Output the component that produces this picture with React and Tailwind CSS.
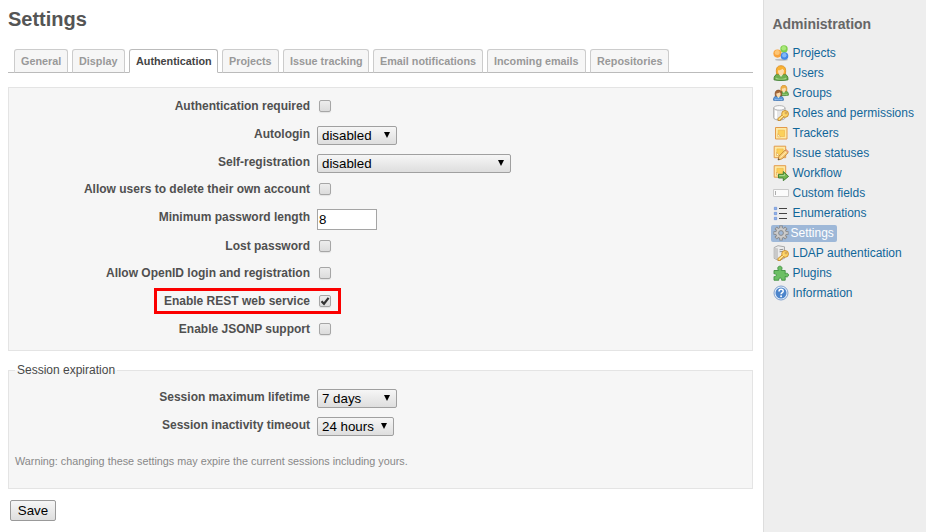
import React from "react";

const tabs = [
  ["General", "w-[54px]"],
  ["Display", "w-[53px]"],
  ["Authentication", "w-[89px]"],
  ["Projects", "w-[57px]"],
  ["Issue tracking", "w-[86px]"],
  ["Email notifications", "w-[110px]"],
  ["Incoming emails", "w-[99px]"],
  ["Repositories", "w-[79px]"],
];

function Check({ checked }) {
  return (
    <span className="ml-[2px] mt-[2px] flex h-3 w-3 items-center justify-center rounded-[2px] border border-[#a6a6a6] bg-linear-to-b from-[#ededed] to-[#dcdcdc] shadow-[0_1px_1px_rgba(0,0,0,0.08)]">
      {checked && (
        <svg viewBox="0 0 10 10" className="h-[10px] w-[10px] shrink-0">
          <path d="M1.5 5.2 4 7.8 8.6 1.9" fill="none" stroke="#333" strokeWidth="2.2" />
        </svg>
      )}
    </span>
  );
}

function Select({ value, width }) {
  return (
    <span className={`flex h-[19px] items-center justify-between rounded-[2px] border border-[#a0a0a0] bg-linear-to-b from-[#f6f6f6] to-[#dedede] pl-1 pr-[6px] text-[13.333px] leading-[17px] text-black ${width}`}>
      <span className="whitespace-nowrap">{value}</span>
      <svg viewBox="0 0 6 6" className="-mt-[2px] h-[6px] w-[6px] shrink-0">
        <path d="M0 0h6L3 6z" fill="#000" />
      </svg>
    </span>
  );
}

function Row({ label, height, marked, children }) {
  return (
    <div className={`relative flex items-start ${height}`}>
      <label className="w-[301px] shrink-0 text-right text-[12px] font-bold leading-4 text-[#505050]">{label}</label>
      <div className="ml-[7px]">{children}</div>
      {marked && <span className="absolute -top-[5px] left-[145px] h-[26px] w-[187px] border-[3px] border-[#fb0000]" />}
    </div>
  );
}

function Key() {
  return (
    <g stroke="#c08324" strokeWidth=".8" strokeLinejoin="round">
      <path d="m10 9.300-5.200 4.300.2 1.900h2.500l.3-1.400h1.300l.2-1.300 2.700-1.300z" fill="#fbd262" />
      <circle cx="12.100" cy="8.900" r="3.400" fill="#fcd468" />
      <path d="m10.500 10.500-4.300 3.800" stroke="#fff0b0" strokeWidth="1" />
      <circle cx="13" cy="8" r=".9" fill="#fff" />
    </g>
  );
}

function Person({ hair, hairEdge, body, shine, edge }) {
  return (
    <g>
      <path d="M1 14.800C.8 11 2.500 9.500 5 9h6c2.500.5 4.200 2 4 5.800-3 .9-11 .9-14 0z" fill={body} stroke={edge} strokeWidth=".9" />
      <path d="M3 12.500c2 1.700 8 1.700 10 0l.5 1.500c-2 .8-9 .8-11 0z" fill={shine} />
      <path d="M5.500 8.500h5L8 12z" fill="#e8f2d4" />
      <path d="M3.700 9C2.500 3.500 4.200.7 8 .7s5.500 2.800 4.300 8.300z" fill={hair} stroke={hairEdge} strokeWidth=".8" />
      <path d="M5 5.300c2 .1 3.800-.6 4.600-1.500.3.800.8 1.200 1.400 1.500.1 3-1.100 5-3 5s-3.100-2-3-5z" fill="#fddcae" />
    </g>
  );
}

function Note() {
  return (
    <g>
      <path d="M2.500 2.500H14V14H2.500z" fill="#fde9a4" stroke="#e39a4a" />
      <path d="M5.200 5.200h6.300v6.300H7.600L5.200 9.100z" fill="#fbd05a" />
      <path d="M5.200 9.100v-3.900h6.300v6.300H7.600" fill="none" stroke="#f0b445" strokeWidth=".6" />
      <path d="M4.800 8.800v3h3z" fill="#fffbe8" stroke="#dfa040" strokeWidth=".6" />
    </g>
  );
}

const icons = {
  Projects: (
    <>
      <ellipse cx="8.500" cy="14.700" rx="6.500" ry="1" fill="#bcbcbc" />
      <circle cx="11" cy="4" r="3.700" fill="#7fce4a" />
      <circle cx="10.800" cy="3.300" r="2.300" fill="#a9e87a" />
      <circle cx="4.500" cy="8.600" r="4.100" fill="#f8a23a" />
      <circle cx="4.200" cy="7.600" r="2.500" fill="#fdc574" />
      <circle cx="11.500" cy="11" r="3.800" fill="#4288e6" />
      <circle cx="11.300" cy="10.200" r="2.200" fill="#83b8f7" />
    </>
  ),
  Users: <Person hair="#f9b234" hairEdge="#d98a1e" body="#6fae50" shine="#a3d488" edge="#3f7f30" />,
  Groups: (
    <>
      <g transform="translate(5.600 -.2) scale(.66 .7)"><Person hair="#eeb045" hairEdge="#c98528" body="#6fae50" shine="#a3d488" edge="#3f7f30" /></g>
      <g transform="translate(-.3 4.600) scale(.72)"><Person hair="#a4683a" hairEdge="#7b4720" body="#5b97d8" shine="#94bfee" edge="#2f65a8" /></g>
    </>
  ),
  "Roles and permissions": (
    <>
      <path d="M.7 3v9.800c0 3 11.300 3 11.300 0V3z" fill="#e6e6e6" stroke="#9d9d9d" strokeWidth=".8" />
      <path d="M3 5.500v8" stroke="#fff" strokeWidth="2" />
      <ellipse cx="6.350" cy="2.900" rx="5.650" ry="2.300" fill="#fafafa" stroke="#a2a2a2" strokeWidth=".8" />
      <Key />
    </>
  ),
  Trackers: <Note />,
  "Issue statuses": (
    <>
      <g transform="translate(-1.300 -1.300)"><Note /></g>
      <path d="m5 15 1-3.800 6.200-6.200 2.900 2.700L8.800 14z" fill="#fbd07c" stroke="#b5772c" strokeWidth=".8" />
      <path d="m7.300 12.600 6.200-6.200" stroke="#fff0c0" strokeWidth=".8" />
      <path d="m12.200 5 1-.9 2.700 2.500-.8 1.100z" fill="#e99a78" />
      <path d="m5 15 .5-1.800 1.300 1.200z" fill="#444" />
    </>
  ),
  Workflow: (
    <>
      <g transform="translate(-1.300 -1.800)"><Note /></g>
      <path d="M5.500 9.300h4.800V6.500l5.300 4.900-5.300 4.300v-2.700H5.500z" fill="#74b552" stroke="#3c7e2f" strokeWidth=".9" strokeLinejoin="round" />
      <path d="M6.300 10.500h5.200V9" fill="none" stroke="#b4dda0" strokeWidth=".8" />
    </>
  ),
  "Custom fields": (
    <>
      <path d="M.5 4.500h15v7H.5z" fill="#fbfbfb" stroke="#cacaca" />
      <path d="M2.500 6v4" stroke="#999" strokeWidth=".8" />
    </>
  ),
  Enumerations: (
    <>
      <path d="M6 3.500h8M6 8.500h8M6 13.500h8" stroke="#444" />
      <g fill="#8eb2ef" stroke="#6288cf" strokeWidth=".6"><path d="M1.300 2.300h2.400v2.400H1.300zM1.300 7.300h2.400v2.400H1.300zM1.300 12.300h2.400v2.400H1.300z" /></g>
    </>
  ),
  Settings: (
    <>
      <g stroke="#858585" strokeWidth="3.400">
        <path d="M8 .5v15M.5 8h15M2.700 2.700l10.600 10.600M13.300 2.700 2.700 13.300" />
      </g>
      <circle cx="8" cy="8" r="5.600" fill="#858585" />
      <g stroke="#c6c6c6" strokeWidth="1.800">
        <path d="M8 1.200v13.600M1.200 8h13.600M3.200 3.200l9.600 9.600M12.800 3.200 3.200 12.800" />
      </g>
      <circle cx="8" cy="8" r="4.900" fill="#cbcbcb" />
      <circle cx="8" cy="8" r="2.400" fill="#9eb8d8" stroke="#858585" strokeWidth=".9" />
    </>
  ),
  "LDAP authentication": (
    <>
      <path d="M1.200 2.500 5 .7l6.500 1.100v11.500l-6 2.200-4.300-2.200z" fill="#ececec" stroke="#999" strokeWidth=".8" />
      <path d="M1.500 2.800 5 3.500v11.500l-3.500-2z" fill="#c9c9c9" />
      <path d="M6.500 4.800 10.300 4.300M6.500 6.800 10.300 6.300" stroke="#888" strokeWidth=".9" />
      <Key />
    </>
  ),
  Plugins: (
    <path
      d="M1 5.500h4.600C4 3.300 4.900 1.200 6.900 1.200s2.900 2.100 1.300 4.300h4v3.300c1.800-1.200 3.300-.2 3.300 1.300s-1.500 2.500-3.300 1.300v3.800H8.600c1-3-3.800-3-2.800 0H1v-3.700c3 1 3-3.600 0-2.600z"
      fill="#6cbf64" stroke="#3f9142" strokeWidth=".9" strokeLinejoin="round"
    />
  ),
  Information: (
    <>
      <circle cx="8" cy="8" r="7" fill="#e6effa" stroke="#7698ca" strokeWidth=".9" />
      <circle cx="8" cy="8" r="5.500" fill="#4d85cb" />
      <path d="M6 6.500c0-3 4.200-2.700 4.200-.3 0 1.500-2.100 1.400-2.100 3.100" fill="none" stroke="#fff" strokeWidth="1.500" />
      <circle cx="8.100" cy="11.300" r=".95" fill="#fff" />
    </>
  ),
};

export default function App() {
  return (
    <div className="flex h-[532px] w-[926px] overflow-hidden bg-white font-['Liberation_Sans',Arial,sans-serif]">
      <main className="w-[763px] shrink-0 pl-2 pr-[10px]">
        <h2 className="pt-[7px] text-[20px] font-bold leading-6 text-[#555]">Settings</h2>
        <nav className="mt-[18px] flex h-6 gap-1 border-b border-[#bbb] pl-[6px]">
          {tabs.map(([name, width]) => (
            <a
              key={name}
              className={`h-6 shrink-0 whitespace-nowrap rounded-t-[3px] border pl-[6px] text-[10.8px] font-bold leading-[23px] ${width} ${
                name === "Authentication" ? "border-[#bbb] border-b-white bg-white text-[#444]" : "border-[#ccc] border-b-[#bbb] bg-[#f6f6f6] text-[#999]"
              }`}
            >
              {name}
            </a>
          ))}
        </nav>

        <section className="mt-[14px] h-[264px] border border-[#e4e4e4] bg-[#f6f6f6] pt-[10px]">
          <Row label="Authentication required" height="h-7"><Check /></Row>
          <Row label="Autologin" height="h-7"><Select value="disabled" width="w-[80px]" /></Row>
          <Row label="Self-registration" height="h-[27px]"><Select value="disabled" width="w-[194px]" /></Row>
          <Row label="Allow users to delete their own account" height="h-7"><Check /></Row>
          <Row label="Minimum password length" height="h-[29px]">
            <span className="block h-[21px] w-[60px] border border-[#a5a5a5] bg-white pl-px text-[13.333px] leading-[20px] text-black">8</span>
          </Row>
          <Row label="Lost password" height="h-[27px]"><Check /></Row>
          <Row label="Allow OpenID login and registration" height="h-7"><Check /></Row>
          <Row label="Enable REST web service" height="h-7" marked><Check checked /></Row>
          <Row label="Enable JSONP support" height="h-7"><Check /></Row>
        </section>

        <fieldset className="mt-3 h-[126px] border border-[#e4e4e4] bg-[#f6f6f6]">
          <legend className="ml-[6px] h-[14px] px-[2px] text-[12px] leading-[14px] text-[#484848]">Session expiration</legend>
          <div className="pt-3">
            <Row label="Session maximum lifetime" height="h-7"><Select value="7 days" width="w-[80px]" /></Row>
            <Row label="Session inactivity timeout" height="h-7"><Select value="24 hours" width="w-[77px]" /></Row>
          </div>
          <p className="ml-[6px] mt-2 text-[10.8px] leading-4 text-[#888]">Warning: changing these settings may expire the current sessions including yours.</p>
        </fieldset>

        <button className="ml-[2px] mt-[11px] block h-[21px] w-[46px] rounded-[2px] border border-[#999] bg-linear-to-b from-[#f6f6f6] to-[#dedede] text-[13.333px] leading-[19px] text-black">Save</button>
      </main>

      <aside className="w-[163px] shrink-0 border-l border-[#ddd] bg-[#eee] pl-[7px] pt-4">
        <h3 className="pl-[1.4px] text-[14px] font-bold leading-4 text-[#666]">Administration</h3>
        <ul className="mt-[11px]">
          {Object.keys(icons).map((name) => {
            const active = name === "Settings";
            return (
              <li key={name} className="flex h-5 items-center">
                <a className={`flex h-[17px] items-center whitespace-nowrap rounded-[2px] pl-[2px] text-[12px] leading-[17px] ${active ? "w-[66px] gap-[1.5px] bg-[#9eb8d8] text-white" : "gap-[3.5px] text-[#116699]"}`}>
                  <svg viewBox="0 0 16 16" className="h-4 w-4 shrink-0">{icons[name]}</svg>
                  <span>{name}</span>
                </a>
              </li>
            );
          })}
        </ul>
      </aside>
    </div>
  );
}
